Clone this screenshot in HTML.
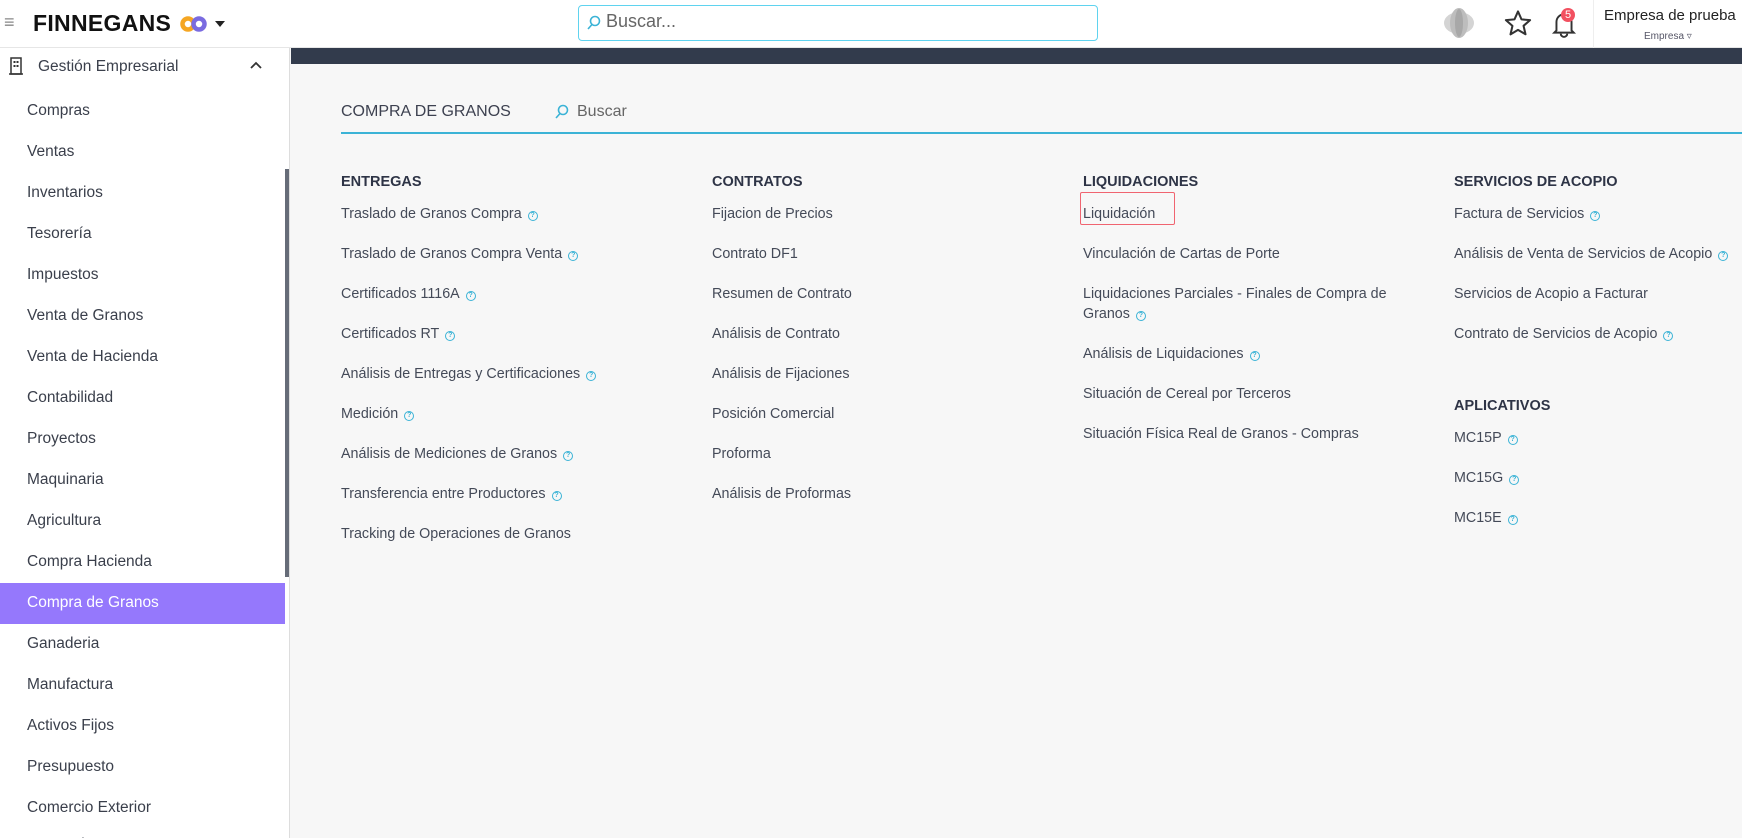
<!DOCTYPE html>
<html><head><meta charset="utf-8"><style>
*{margin:0;padding:0;box-sizing:border-box}
html,body{width:1742px;height:838px;overflow:hidden}
body{background:#f7f7f7;font-family:"Liberation Sans",sans-serif;color:#3d4150;position:relative}
.a{position:absolute;white-space:nowrap}
#hdr{position:absolute;left:0;top:0;width:1742px;height:48px;background:#fff;border-bottom:1px solid #e6e6e6}
#side{position:absolute;left:0;top:48px;width:290px;height:790px;background:#fff;border-right:1px solid #ddd;overflow:hidden}
.si{position:absolute;left:27px;font-size:15.5px;color:#3a3f4b;transform:translateY(-50%);white-space:nowrap}
.h{position:absolute;font-size:14.5px;font-weight:bold;color:#2e3446;transform:translateY(-50%)}
.it{position:absolute;font-size:14.3px;color:#444a58;transform:translateY(-50%);white-space:nowrap}
.q{display:inline-block;width:10px;height:10px;border:1.3px solid #3bb3d6;border-radius:50%;font-size:7px;line-height:7.5px;text-align:center;color:#3bb3d6;margin-left:6px;vertical-align:1px;font-weight:bold}
</style></head><body>
<div id="hdr">
 <div class="a" style="left:4px;top:12px;font-size:18px;color:#888">≡</div>
 <div class="a" style="left:33px;top:10px;font-size:23px;font-weight:bold;color:#111;letter-spacing:0.3px">FINNEGANS</div>
 <svg class="a" style="left:179px;top:15px" width="30" height="18" viewBox="0 0 30 18"><circle cx="9" cy="9" r="5.5" fill="none" stroke="#f5a623" stroke-width="4.5"/><circle cx="20" cy="9" r="5.5" fill="none" stroke="#7a6be0" stroke-width="4.5"/></svg>
 <div class="a" style="left:215px;top:21px;width:0;height:0;border-left:5px solid transparent;border-right:5px solid transparent;border-top:6px solid #222"></div>
 <div class="a" style="left:578px;top:5px;width:520px;height:36px;border:1px solid #5fd3ef;border-radius:4px;background:#fff"></div>
 <svg class="a" style="left:587px;top:15px" width="14" height="16"><circle cx="8" cy="6" r="4.5" fill="none" stroke="#3bb3d6" stroke-width="1.6"/><line x1="5" y1="9.5" x2="1" y2="14" stroke="#3bb3d6" stroke-width="1.6"/></svg>
 <div class="a" style="left:606px;top:11px;font-size:18px;color:#666">Buscar...</div>
 <svg class="a" style="left:1442px;top:6px" width="34" height="34"><ellipse cx="17" cy="17" rx="15" ry="11" fill="#d4d4d4"/><ellipse cx="17" cy="17" rx="9" ry="15" fill="#bdbdbd"/><ellipse cx="17" cy="17" rx="4" ry="14" fill="#a8a8a8"/></svg>
 <svg class="a" style="left:1503px;top:9px" width="30" height="29" viewBox="0 0 24 24"><path d="M12 2l2.9 6.6 7.1.6-5.4 4.7 1.6 7L12 17.3 5.8 21l1.6-7L2 9.2l7.1-.6z" fill="none" stroke="#333" stroke-width="1.7" stroke-linejoin="round"/></svg>
 <svg class="a" style="left:1551px;top:10px" width="26" height="28" viewBox="0 0 24 26"><path d="M5 19V11a7 7 0 0114 0v8l2 2H3z M9 22a3 3 0 006 0" fill="none" stroke="#333" stroke-width="1.8"/></svg>
 <div class="a" style="left:1561px;top:8px;width:14px;height:14px;border-radius:50%;background:#f25060;color:#fff;font-size:11px;line-height:14px;text-align:center">5</div>
 <div class="a" style="left:1593px;top:0;width:1px;height:48px;background:#eee"></div>
 <div class="a" style="left:1604px;top:7px;font-size:15px;color:#222">Empresa de prueba</div>
 <div class="a" style="left:1644px;top:31px;font-size:10px;color:#556">Empresa ▿</div>
</div>
<div id="side">
 <svg class="a" style="left:9px;top:9px" width="14" height="18"><rect x="2" y="1" width="10" height="16" fill="none" stroke="#333" stroke-width="1.5"/><rect x="4.5" y="4" width="2" height="2" fill="#333"/><rect x="7.5" y="4" width="2" height="2" fill="#333"/><rect x="4.5" y="8" width="2" height="2" fill="#333"/><rect x="7.5" y="8" width="2" height="2" fill="#333"/><line x1="0" y1="17" x2="14" y2="17" stroke="#333" stroke-width="1.5"/></svg>
 <div class="si" style="left:38px;top:19px">Gestión Empresarial</div>
 <svg class="a" style="left:250px;top:13px" width="12" height="8"><path d="M1 7l5-5 5 5" fill="none" stroke="#333" stroke-width="1.8"/></svg>
 <div class="si" style="top:63px">Compras</div>
 <div class="si" style="top:104px">Ventas</div>
 <div class="si" style="top:145px">Inventarios</div>
 <div class="si" style="top:186px">Tesorería</div>
 <div class="si" style="top:227px">Impuestos</div>
 <div class="si" style="top:268px">Venta de Granos</div>
 <div class="si" style="top:309px">Venta de Hacienda</div>
 <div class="si" style="top:350px">Contabilidad</div>
 <div class="si" style="top:391px">Proyectos</div>
 <div class="si" style="top:432px">Maquinaria</div>
 <div class="si" style="top:473px">Agricultura</div>
 <div class="si" style="top:514px">Compra Hacienda</div>
 <div class="a" style="left:0;top:535px;width:285px;height:41px;background:#9578fc"></div>
 <div class="si" style="top:555px;color:#fff">Compra de Granos</div>
 <div class="si" style="top:596px">Ganaderia</div>
 <div class="si" style="top:637px">Manufactura</div>
 <div class="si" style="top:678px">Activos Fijos</div>
 <div class="si" style="top:719px">Presupuesto</div>
 <div class="si" style="top:760px">Comercio Exterior</div>
 <div class="si" style="top:797px">Comercio Exte</div>
 <div class="a" style="left:285px;top:121px;width:5px;height:408px;background:#666c78"></div>
</div>
<div class="a" style="left:291px;top:48px;width:1451px;height:16px;background:#323b4c"></div>
<div class="a" style="left:341px;top:103px;font-size:16px;color:#3d4150">COMPRA DE GRANOS</div>
<svg class="a" style="left:555px;top:104px" width="14" height="16"><circle cx="8" cy="6" r="4.5" fill="none" stroke="#3bb3d6" stroke-width="1.6"/><line x1="5" y1="9.5" x2="1" y2="14" stroke="#3bb3d6" stroke-width="1.6"/></svg>
<div class="a" style="left:577px;top:103px;font-size:16px;color:#666">Buscar</div>
<div class="a" style="left:341px;top:132px;width:1401px;height:2px;background:#3bb3d6"></div>

<div class="h" style="left:341px;top:182px">ENTREGAS</div>
<div class="it" style="left:341px;top:214px">Traslado de Granos Compra<span class="q">?</span></div>
<div class="it" style="left:341px;top:254px">Traslado de Granos Compra Venta<span class="q">?</span></div>
<div class="it" style="left:341px;top:294px">Certificados 1116A<span class="q">?</span></div>
<div class="it" style="left:341px;top:334px">Certificados RT<span class="q">?</span></div>
<div class="it" style="left:341px;top:374px">Análisis de Entregas y Certificaciones<span class="q">?</span></div>
<div class="it" style="left:341px;top:414px">Medición<span class="q">?</span></div>
<div class="it" style="left:341px;top:454px">Análisis de Mediciones de Granos<span class="q">?</span></div>
<div class="it" style="left:341px;top:494px">Transferencia entre Productores<span class="q">?</span></div>
<div class="it" style="left:341px;top:534px">Tracking de Operaciones de Granos</div>

<div class="h" style="left:712px;top:182px">CONTRATOS</div>
<div class="it" style="left:712px;top:214px">Fijacion de Precios</div>
<div class="it" style="left:712px;top:254px">Contrato DF1</div>
<div class="it" style="left:712px;top:294px">Resumen de Contrato</div>
<div class="it" style="left:712px;top:334px">Análisis de Contrato</div>
<div class="it" style="left:712px;top:374px">Análisis de Fijaciones</div>
<div class="it" style="left:712px;top:414px">Posición Comercial</div>
<div class="it" style="left:712px;top:454px">Proforma</div>
<div class="it" style="left:712px;top:494px">Análisis de Proformas</div>

<div class="h" style="left:1083px;top:182px">LIQUIDACIONES</div>
<div class="a" style="left:1080px;top:192px;width:95px;height:33px;border:1.5px solid #f06470;border-radius:2px"></div>
<div class="it" style="left:1083px;top:214px">Liquidación</div>
<div class="it" style="left:1083px;top:254px">Vinculación de Cartas de Porte</div>
<div class="it" style="left:1083px;top:294px">Liquidaciones Parciales - Finales de Compra de</div>
<div class="it" style="left:1083px;top:314px">Granos<span class="q">?</span></div>
<div class="it" style="left:1083px;top:354px">Análisis de Liquidaciones<span class="q">?</span></div>
<div class="it" style="left:1083px;top:394px">Situación de Cereal por Terceros</div>
<div class="it" style="left:1083px;top:434px">Situación Física Real de Granos - Compras</div>

<div class="h" style="left:1454px;top:182px">SERVICIOS DE ACOPIO</div>
<div class="it" style="left:1454px;top:214px">Factura de Servicios<span class="q">?</span></div>
<div class="it" style="left:1454px;top:254px">Análisis de Venta de Servicios de Acopio<span class="q">?</span></div>
<div class="it" style="left:1454px;top:294px">Servicios de Acopio a Facturar</div>
<div class="it" style="left:1454px;top:334px">Contrato de Servicios de Acopio<span class="q">?</span></div>
<div class="h" style="left:1454px;top:406px">APLICATIVOS</div>
<div class="it" style="left:1454px;top:438px">MC15P<span class="q">?</span></div>
<div class="it" style="left:1454px;top:478px">MC15G<span class="q">?</span></div>
<div class="it" style="left:1454px;top:518px">MC15E<span class="q">?</span></div>
</body></html>
